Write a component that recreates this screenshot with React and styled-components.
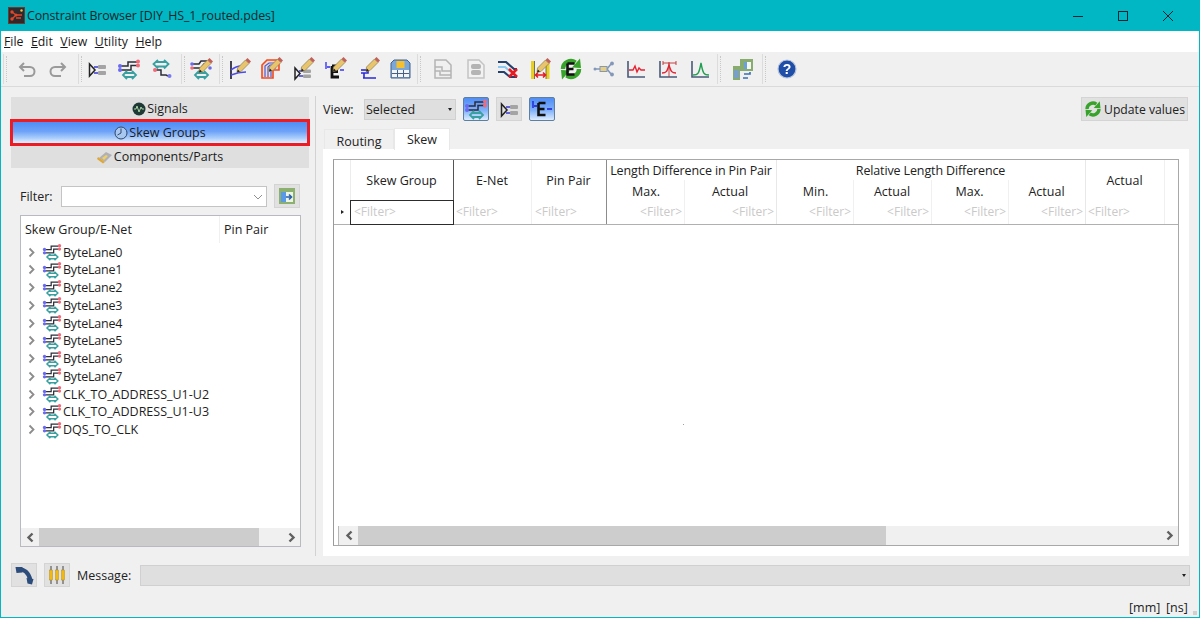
import React from 'react';
import styled, { createGlobalStyle } from 'styled-components';

const GlobalStyle = createGlobalStyle`
  html, body { margin: 0; padding: 0; background: #f0f0f0; }
  body { font-family: "Open Sans", "Noto Sans", "Liberation Sans", sans-serif; font-size: 12.5px; color: #222; overflow: hidden; }
  * { box-sizing: border-box; }
`;

const Window = styled.div`
  position: relative;
  width: 1200px;
  height: 618px;
  background: #f0f0f0;
  overflow: hidden;
  &::after {
    content: '';
    position: absolute;
    inset: 0;
    border: 1px solid #00b7c3;
    pointer-events: none;
  }
`;

const TitleBar = styled.div`
  position: absolute;
  left: 0;
  top: 0;
  width: 1200px;
  height: 31px;
  background: #00b7c3;
  display: flex;
  align-items: center;
  padding-left: 8px;
  color: #10282c;
  font-size: 12.4px;
`;

const TitleText = styled.span`
  margin-left: 2px;
  letter-spacing: -0.1px;
`;

const WinButton = styled.div`
  position: absolute;
  top: 0;
  left: ${(p) => p.$x}px;
  width: 45px;
  height: 31px;
  display: flex;
  align-items: center;
  justify-content: center;
`;

const MenuBar = styled.div`
  position: absolute;
  left: 1px;
  top: 31px;
  width: 1198px;
  height: 21px;
  background: #fff;
  display: flex;
  align-items: center;
  padding-left: 3px;
  gap: 7.5px;
  font-size: 12.3px;
  color: #1a1a1a;
`;

const MenuItem = styled.span`
  &::first-letter { text-decoration: underline; }
`;

const Toolbar = styled.div`
  position: absolute;
  left: 0;
  top: 52px;
  width: 100%;
  height: 35px;
  background: #f0f0f0;
  border-bottom: 1px solid #dadada;
`;

const ToolIcon = styled.div`
  position: absolute;
  top: 5px;
  left: ${(p) => p.$x - 12}px;
  width: 24px;
  height: 24px;
  filter: blur(0.35px);
`;

const ToolSep = styled.div`
  position: absolute;
  top: 2px;
  height: 30px;
  left: ${(p) => p.$x}px;
  width: 5px;
  border-left: 1px solid #dcdcdc;
  &::after {
    content: '';
    position: absolute;
    left: 2px;
    top: 2px;
    bottom: 2px;
    width: 1px;
    border-left: 1px dotted #c8c8c8;
  }
`;

const PanelButton = styled.div`
  position: absolute;
  left: ${(p) => (p.$active ? 10 : 11)}px;
  top: ${(p) => p.$y}px;
  width: ${(p) => (p.$active ? 300 : 298)}px;
  height: ${(p) => p.$h}px;
  display: flex;
  align-items: center;
  justify-content: center;
  gap: 1px;
  font-size: 12.5px;
  color: #1c1c1c;
  background: ${(p) => (p.$active
    ? 'linear-gradient(#4f8df5 0%, #6ea3f8 45%, #a8cbfb 75%, #e4f1fe 100%)'
    : '#dfdfdf')};
  border: ${(p) => (p.$active ? '3px solid #ed1c24' : '0')};
`;

const Label = styled.span`
  position: absolute;
  left: ${(p) => p.$x}px;
  top: ${(p) => p.$y}px;
  line-height: 16px;
  color: #222;
`;

const Combo = styled.div`
  position: absolute;
  left: 61px;
  top: 186px;
  width: 206px;
  height: 21px;
  background: #fff;
  border: 1px solid #c4c4c4;
  display: flex;
  align-items: center;
  justify-content: flex-end;
  padding-right: 3px;
`;

const SquareButton = styled.div`
  position: absolute;
  left: ${(p) => p.$x}px;
  top: ${(p) => p.$y}px;
  width: 26px;
  height: 24px;
  border: 1px solid ${(p) => (p.$on ? '#5f7f9f' : '#d4d4d4')};
  border-radius: ${(p) => (p.$on ? '2px' : '0')};
  background: ${(p) => (p.$on ? 'linear-gradient(#4f8df5 0%, #7fb0fa 55%, #dcecfe 100%)' : '#e1e1e1')};
  display: flex;
  align-items: center;
  justify-content: center;
  svg { filter: blur(0.3px); }
`;

const TreeBox = styled.div`
  position: absolute;
  left: 20px;
  top: 215px;
  width: 281px;
  height: 332px;
  background: #fff;
  border: 1px solid #b9b9c0;
`;

const TreeHead = styled.div`
  height: 27px;
  display: flex;
  align-items: center;
  padding-left: 4px;
  position: relative;
  color: #222;
`;

const TreeHeadCol = styled.span`
  position: absolute;
  left: 198px;
  top: 0;
  height: 27px;
  border-left: 1px solid #f0f0f0;
  padding-left: 4px;
  line-height: 27px;
`;

const TreeRow = styled.div`
  position: absolute;
  left: 0;
  top: ${(p) => p.$y}px;
  height: 18px;
  display: flex;
  align-items: center;
  white-space: nowrap;
  color: #1e1e1e;
`;

const RowArrow = styled.span`
  width: 20px;
  display: flex;
  justify-content: center;
  padding-left: 1px;
  margin-right: 1px;
`;

const RowIcon = styled.span`
  width: 21px;
  height: 18px;
  display: flex;
  align-items: center;
  svg { width: 20px; height: 20px; flex: none; filter: blur(0.35px); }
`;

const ByteText = styled.span`
  letter-spacing: ${(p) => (p.$tight ? '-0.2px' : '0')};
`;

const Scrollbar = styled.div`
  position: absolute;
  left: ${(p) => p.$x}px;
  top: ${(p) => p.$y}px;
  width: ${(p) => p.$w}px;
  height: ${(p) => p.$h}px;
  background: #f0f0f0;
`;

const ScrollThumb = styled.div`
  position: absolute;
  left: ${(p) => p.$x}px;
  top: 0;
  bottom: 0;
  width: ${(p) => p.$w}px;
  background: #cdcdcd;
`;

const ScrollArrow = styled.div`
  position: absolute;
  top: 0;
  bottom: 0;
  ${(p) => (p.$right ? 'right: 0;' : `left: ${p.$x || 0}px;`)}
  width: 18px;
  display: flex;
  align-items: center;
  justify-content: center;
`;

const ScrollStub = styled.div`
  position: absolute;
  left: 0;
  top: 0;
  bottom: 0;
  width: 5px;
  background: #fff;
  border-right: 1px solid #b8b8b8;
`;

const Splitter = styled.div`
  position: absolute;
  left: 315px;
  top: 96px;
  width: 1px;
  height: 460px;
  background: #d2d2d2;
`;

const SelectBox = styled.div`
  position: absolute;
  left: ${(p) => p.$x}px;
  top: ${(p) => p.$y}px;
  width: ${(p) => p.$w}px;
  height: 21px;
  background: #dfdfdf;
  border: 1px solid #d0d0d0;
  display: flex;
  align-items: center;
  padding-left: 1px;
  color: #222;
  &::after {
    content: '';
    position: absolute;
    right: 3px;
    top: 8px;
    border-left: 2px solid transparent;
    border-right: 2px solid transparent;
    border-top: 3px solid #222;
  }
`;

const UpdateButton = styled.div`
  position: absolute;
  left: 1081px;
  top: 97px;
  width: 107px;
  height: 24px;
  background: #e1e1e1;
  border: 1px solid #d4d4d4;
  display: flex;
  align-items: center;
  padding-left: 2px;
  gap: 2px;
  font-size: 12.2px;
  white-space: nowrap;
`;

const Tab = styled.div`
  position: absolute;
  left: ${(p) => p.$x}px;
  top: ${(p) => (p.$active ? 128 : 129)}px;
  width: ${(p) => p.$w}px;
  height: ${(p) => (p.$active ? 22 : 20)}px;
  background: ${(p) => (p.$active ? '#fff' : '#f0f0f0')};
  border: 1px solid #e8e8e8;
  border-bottom: 0;
  text-align: center;
  line-height: ${(p) => (p.$active ? 21 : 23)}px;
  color: #222;
`;

const TabPanel = styled.div`
  position: absolute;
  left: 323px;
  top: 149px;
  width: 866px;
  height: 407px;
  background: #fff;
`;

const Table = styled.div`
  position: absolute;
  left: 333px;
  top: 159px;
  width: 846px;
  height: 387px;
  background: #fff;
  border: 1px solid #a8a8a8;
  border-left-color: #9a9a9a;
`;

const TableRule = styled.div`
  position: absolute;
  left: ${(p) => p.$x}px;
  top: ${(p) => p.$y}px;
  width: ${(p) => p.$w}px;
  height: ${(p) => p.$h}px;
  background: ${(p) => p.$c};
`;

const HeadText = styled.div`
  position: absolute;
  left: ${(p) => p.$x}px;
  top: ${(p) => p.$y}px;
  width: ${(p) => p.$w}px;
  text-align: center;
  line-height: 16px;
  color: #222;
  white-space: nowrap;
  letter-spacing: ${(p) => (p.$tight ? '-0.13px' : '0')};
`;

const FilterText = styled.div`
  position: absolute;
  left: ${(p) => p.$x}px;
  top: 204px;
  width: ${(p) => p.$w}px;
  text-align: ${(p) => (p.$left ? 'left' : 'right')};
  line-height: 16px;
  color: #c9c9c9;
  font-size: 12px;
  white-space: nowrap;
`;

const CurrentCell = styled.div`
  position: absolute;
  left: 350px;
  top: 200px;
  width: 104px;
  height: 25px;
  border: 1px solid #2c2c2c;
  background: #fff;
`;

const RowMark = styled.div`
  position: absolute;
  left: 341px;
  top: 210px;
  border-top: 2px solid transparent;
  border-bottom: 2px solid transparent;
  border-left: 3px solid #222;
`;

const CenterDot = styled.div`
  position: absolute;
  left: 683px;
  top: 424px;
  width: 1px;
  height: 1px;
  background: #a0a0a0;
`;

const StatusText = styled.div`
  position: absolute;
  left: ${(p) => p.$x}px;
  top: 600px;
  line-height: 16px;
  color: #222;
`;

const Grip = styled.div`
  position: absolute;
  right: 3px;
  bottom: 3px;
  width: 4px;
  height: 4px;
  background: #d0d0d0;
`;

// small drawings for the toolbar and tree

const Pencil = ({ x = 0, y = 0 }) => (
  <g transform={`translate(${x} ${y})`}>
    <path d="M10.5 12 L18.5 4 L22 7.5 L14 15.5 L10 16.5 Z" fill="#e8c56c" stroke="#8a7a50" strokeWidth="0.7" />
    <path d="M18.5 4 L20.5 2 L24 5.5 L22 7.5 Z" fill="#c0605a" />
    <path d="M10 16.5 L10.8 13.5 L13 15.5 Z" fill="#222" />
  </g>
);

const NetsIcon = ({ size = 24 }) => (
  <svg width={size} height={size} viewBox="0 0 24 24" fill="none">
    <path d="M4 9 H11 V5 H20" stroke="#2c2c3a" strokeWidth="1.5" />
    <path d="M4 13 H14 V8.5 H20" stroke="#2c2c3a" strokeWidth="1.5" />
    <circle cx="3" cy="9" r="2" fill="#6a6af0" />
    <circle cx="3" cy="13" r="2" fill="#6a6af0" />
    <circle cx="21" cy="4.5" r="2" fill="#f06a78" />
    <circle cx="21" cy="8.5" r="2" fill="#f06a78" />
    <path d="M8 16 H17 M8 20 H17 M10 14 L6 18 L10 22 M15 14 L19 18 L15 22" stroke="#38a0a0" strokeWidth="1.8" />
  </svg>
);

const PairIcon = () => (
  <svg width="24" height="24" viewBox="0 0 24 24" fill="none">
    <path d="M4.5 7 V19 L10 13 Z" stroke="#222" strokeWidth="1.5" />
    <path d="M9 10 H13 M9 16 H13" stroke="#3a3ad0" strokeWidth="1.6" />
    <rect x="13" y="8" width="8" height="4" rx="1" fill="#a4a4a4" />
    <rect x="13" y="14" width="8" height="4" rx="1" fill="#a4a4a4" />
  </svg>
);

const SkewIcon = () => (
  <svg width="24" height="24" viewBox="0 0 24 24" fill="none">
    <path d="M7 5 H17 M7 9.5 H17 M9 3 L4.5 7 L9 11.5 M15 3 L19.5 7 L15 11.5" stroke="#38a0a0" strokeWidth="1.8" />
    <path d="M7 13 H12 V18 H17 L19 19" stroke="#2c2c3a" strokeWidth="1.5" />
    <circle cx="6" cy="13" r="2" fill="#f06a78" />
    <circle cx="20.5" cy="19" r="2" fill="#7a7af0" />
  </svg>
);

const NetsEditIcon = () => (
  <svg width="24" height="24" viewBox="0 0 24 24" fill="none">
    <path d="M4 7 H10 L12 4 H18 M4 11 H12 L15 7 H18" stroke="#2c2c3a" strokeWidth="1.5" />
    <circle cx="3" cy="7" r="1.8" fill="#6a6af0" />
    <circle cx="3" cy="11" r="1.8" fill="#f06a78" />
    <circle cx="21" cy="11" r="1.8" fill="#6a6af0" />
    <path d="M8 16 H17 M8 20 H17 M10 14 L6 18 L10 22 M15 14 L19 18 L15 22" stroke="#38a0a0" strokeWidth="1.8" />
    <Pencil x="0" y="-1" />
  </svg>
);

const GraphEditIcon = () => (
  <svg width="24" height="24" viewBox="0 0 24 24" fill="none">
    <path d="M4 4 V22" stroke="#223" strokeWidth="1.7" />
    <path d="M4 13 C8 10 10 9 14 9 M4 18 C9 16 13 15 19 15" stroke="#4a4af0" strokeWidth="1.5" />
    <Pencil x="0" y="-1" />
  </svg>
);

const TraceEditIcon = () => (
  <svg width="24" height="24" viewBox="0 0 24 24" fill="none">
    <path d="M3 21 V8 L8 3 H20 V13 L14 13 V21 Z" fill="#f8d8c8" stroke="#f04a20" strokeWidth="1.6" />
    <path d="M6 20 V9 L10 6 H17 M9 20 V10 L11 8 H17 M12 20 V11 H17" stroke="#3f60e0" strokeWidth="1.2" />
    <Pencil x="0" y="-2" />
  </svg>
);

const PairEditIcon = () => (
  <svg width="24" height="24" viewBox="0 0 24 24" fill="none">
    <path d="M4 11 V22 L9 16.5 Z" stroke="#222" strokeWidth="1.5" />
    <path d="M8 14 H12 M8 19 H12" stroke="#3a3ad0" strokeWidth="1.5" />
    <rect x="12" y="12.5" width="8" height="3.5" rx="1" fill="#a4a4a4" />
    <rect x="12" y="17.5" width="8" height="3.5" rx="1" fill="#a4a4a4" />
    <Pencil x="0" y="-2" />
  </svg>
);

const ENetEditIcon = () => (
  <svg width="24" height="24" viewBox="0 0 24 24" fill="none">
    <path d="M3 5 V12 M4 10 H7" stroke="#2a2af0" strokeWidth="1.3" />
    <path d="M9 9 H16 M9 9 V20 H16 M9 14.5 H15" stroke="#111" strokeWidth="2.8" />
    <path d="M17 13 H21" stroke="#2a2af0" strokeWidth="1.4" />
    <Pencil x="0" y="-2" />
  </svg>
);

const BranchEditIcon = () => (
  <svg width="24" height="24" viewBox="0 0 24 24" fill="none">
    <path d="M12 10 V16 H5 M12 16 H8 V21 H19 M7 21 H20" stroke="#2a2ad8" strokeWidth="1.6" />
    <path d="M5 13 H12" stroke="#2a2ad8" strokeWidth="1.6" />
    <Pencil x="0" y="-2" />
  </svg>
);

const SaveTableIcon = () => (
  <svg width="24" height="24" viewBox="0 0 24 24" fill="none">
    <path d="M3 6 L6 3 H19 L22 6 V21 H3 Z" fill="#7ba7d8" stroke="#44608a" />
    <rect x="8.5" y="4" width="8" height="7" fill="#f4c030" />
    <rect x="4" y="13" width="17" height="7" fill="#f4f4f4" />
    <path d="M4 16.5 H21 M9.5 13 V20 M15.5 13 V20" stroke="#44608a" />
  </svg>
);

const GhostSchemeIcon = () => (
  <svg width="24" height="24" viewBox="0 0 24 24" fill="none" stroke="#b4b4b4" strokeWidth="1.5">
    <path d="M4 3 H15 L20 8 V21 H4 Z" />
    <path d="M4 10 H11 V14 H20 M4 14 H9 V18 H20" />
  </svg>
);

const GhostPartIcon = () => (
  <svg width="24" height="24" viewBox="0 0 24 24" fill="none">
    <path d="M4 3 H15 L20 8 V21 H4 Z" fill="#f2f2f2" stroke="#c4c4c4" strokeWidth="1.5" />
    <rect x="7" y="7" width="10" height="5" rx="2" fill="#b4b4b4" />
    <rect x="7" y="13" width="10" height="5" rx="2" fill="#b4b4b4" />
  </svg>
);

const LinesCrossIcon = () => (
  <svg width="24" height="24" viewBox="0 0 24 24" fill="none">
    <path d="M2 5 H10 L18 12 H21" stroke="#25406e" strokeWidth="2.2" />
    <path d="M2 10 H9 L15 15" stroke="#8cc8f0" strokeWidth="2.2" />
    <path d="M2 15 H8 L14 20 H21" stroke="#25406e" strokeWidth="2.2" />
    <path d="M13 12 L21 20 M21 12 L13 20" stroke="#e81820" strokeWidth="2.6" />
  </svg>
);

const MeasureEditIcon = () => (
  <svg width="24" height="24" viewBox="0 0 24 24" fill="none">
    <rect x="3" y="4" width="3.5" height="18" fill="#e8d020" />
    <rect x="18" y="6" width="3.5" height="16" fill="#e8d020" />
    <path d="M6.5 4 V22 M18 8 V22" stroke="#554" strokeWidth="0.8" />
    <path d="M8 18 H17 M10 15.5 L7.5 18 L10 20.5 M15 15.5 L17.5 18 L15 20.5" stroke="#e81820" strokeWidth="1.6" />
    <Pencil x="-1" y="-1" />
  </svg>
);

const Recycle = ({ size = 24 }) => (
  <svg width={size} height={size} viewBox="0 0 24 24" fill="none">
    <path d="M4 12 A8 8 0 0 1 16.5 5.5" stroke="#37a32a" strokeWidth="4.5" />
    <path d="M20 12 A8 8 0 0 1 7.5 18.5" stroke="#37a32a" strokeWidth="4.5" />
    <path d="M13 10.5 L22 11 L21 1.5 Z" fill="#37a32a" />
    <path d="M11 13.5 L2 13 L3 22.5 Z" fill="#37a32a" />
  </svg>
);

const RecycleEIcon = () => (
  <svg width="24" height="24" viewBox="0 0 24 24" fill="none">
    <Recycle />
    <path d="M8.5 6.5 H15.5 M8.5 6.5 V17.5 H15.5 M8.5 12 H14.5" stroke="#111" strokeWidth="2.6" />
  </svg>
);

const NodesIcon = () => (
  <svg width="24" height="24" viewBox="0 0 24 24" fill="none">
    <path d="M3 12 H8 M15 12 L19 7 M15 12 L19 17" stroke="#8398b8" strokeWidth="1.6" />
    <rect x="8" y="9.5" width="7" height="5" fill="#e8cf80" stroke="#8398b8" />
    <circle cx="3" cy="12" r="1.5" fill="#8398b8" />
    <circle cx="20" cy="6.5" r="1.9" fill="#8398b8" />
    <circle cx="20" cy="17.5" r="1.9" fill="#8398b8" />
  </svg>
);

const ChartIcon = ({ color, d, extra }) => (
  <svg width="24" height="24" viewBox="0 0 24 24" fill="none">
    <path d="M4 4 V20 H21" stroke="#4a5a78" strokeWidth="1.6" />
    <path d={d} stroke={color} strokeWidth="1.4" />
    {extra}
  </svg>
);

const SwapIcon = () => (
  <svg width="24" height="24" viewBox="0 0 24 24" fill="none">
    <rect x="9" y="2" width="13" height="12" fill="#88ab70" />
    <rect x="13" y="5" width="7" height="7" fill="#f4f8ee" />
    <rect x="13" y="5" width="3" height="7" fill="#6ea0d8" />
    <rect x="2" y="9" width="7" height="14" fill="#88ab70" />
    <rect x="3" y="13" width="5" height="8" fill="#7aa0c8" />
    <path d="M13 17 H19 V15 M17 21 H12" stroke="#3a6fb0" strokeWidth="1.6" />
  </svg>
);

const HelpIcon = () => (
  <svg width="24" height="24" viewBox="0 0 24 24">
    <circle cx="12" cy="12" r="9" fill="#1f4ea8" stroke="#b8c4d8" strokeWidth="1.2" />
    <text x="12" y="17" textAnchor="middle" fontFamily="Liberation Sans, sans-serif" fontWeight="700" fontSize="14" fill="#fff">?</text>
  </svg>
);

const ArrowBack = ({ flip }) => (
  <svg width="24" height="24" viewBox="0 0 24 24" fill="none" stroke="#9a9a9a" strokeWidth="2">
    <g transform={flip ? 'matrix(-1 0 0 1 24 0)' : undefined}>
      <path d="M9 6 L5 10 L9 14" />
      <path d="M5 10 H15 A4.5 4.5 0 0 1 15 19 H9" />
    </g>
  </svg>
);

const Chevron = ({ left, color = '#8c8c8c', w = 1.8 }) => (
  <svg width="9" height="11" viewBox="0 0 9 11" fill="none" stroke={color} strokeWidth={w}>
    <path d={left ? 'M6.5 1.5 L2.5 5.5 L6.5 9.5' : 'M2.5 1.5 L6.5 5.5 L2.5 9.5'} />
  </svg>
);

const ENetIcon = () => (
  <svg width="24" height="24" viewBox="0 0 24 24" fill="none">
    <path d="M3 4 V11 M4 9 H7" stroke="#1a1ad0" strokeWidth="1.3" />
    <path d="M8.5 6 H15.5 M8.5 6 V18 H15.5 M8.5 12 H14.5" stroke="#111" strokeWidth="2.6" />
    <path d="M17 12 H22" stroke="#1a1ad0" strokeWidth="1.5" />
  </svg>
);

const SignalsGlyph = () => (
  <svg width="14" height="14" viewBox="0 0 14 14" fill="none">
    <circle cx="7" cy="7" r="6.5" fill="#1f3a35" />
    <path d="M2 7 H4 L5 4 L7 10 L9 5 L10 7 H12" stroke="#b8e0b0" strokeWidth="0.9" />
  </svg>
);

const ClockGlyph = () => (
  <svg width="14" height="14" viewBox="0 0 14 14" fill="none">
    <circle cx="7" cy="7" r="6" fill="#a8c8f0" stroke="#30486c" strokeWidth="1" />
    <path d="M7 2.5 V7 L3.5 9" stroke="#30486c" strokeWidth="1" />
  </svg>
);

const PartGlyph = () => (
  <svg width="16" height="14" viewBox="0 0 16 14">
    <path d="M2 8 L9 2 L15 5 L8 12 Z" fill="#b0b0b8" />
    <path d="M1 7 L8 12 L6 13.5 L0 9 Z" fill="#e0a830" />
    <path d="M5 8 L9 5 L11 6 L7 10 Z" fill="#f0d060" />
  </svg>
);

const ColumnIcon = () => (
  <svg width="18" height="18" viewBox="0 0 18 18" fill="none">
    <rect x="1" y="1" width="16" height="16" fill="#8cb070" />
    <rect x="3" y="5" width="12" height="10" fill="#eef4e4" />
    <rect x="3" y="5" width="5" height="10" fill="#5a98e8" />
    <path d="M8 10 H13 M11 7.5 L13.5 10 L11 12.5" stroke="#2a5fb0" strokeWidth="1.6" />
  </svg>
);

const PhoneIcon = () => (
  <svg width="22" height="22" viewBox="0 0 22 22" fill="none">
    <path d="M4 5.5 C11 4 16 9 17.5 16.5" stroke="#2c4c7c" strokeWidth="4" />
    <path d="M2.5 3 L9.5 3 L9.5 8.5 L3.5 9 Z M13.5 14 L20.5 15 L19 20.5 L14.5 19.5 Z" fill="#2c4c7c" />
  </svg>
);

const ResistorsIcon = () => (
  <svg width="22" height="22" viewBox="0 0 22 22" fill="none">
    {[5, 11, 17].map((x) => (
      <g key={x}>
        <path d={`M${x} 2 V20`} stroke="#444" strokeWidth="1" />
        <rect x={x - 1.5} y="6" width="3" height="10" fill="#f0b810" stroke="#a88010" strokeWidth="0.4" />
      </g>
    ))}
  </svg>
);

const menus = ['File', 'Edit', 'View', 'Utility', 'Help'];

const tools = [
  [27, <ArrowBack />],
  [58, <ArrowBack flip />],
  [97, <PairIcon />],
  [129, <NetsIcon />],
  [161, <SkewIcon />],
  [201, <NetsEditIcon />],
  [239, <GraphEditIcon />],
  [271, <TraceEditIcon />],
  [303, <PairEditIcon />],
  [335, <ENetEditIcon />],
  [368, <BranchEditIcon />],
  [400, <SaveTableIcon />],
  [443, <GhostSchemeIcon />],
  [476, <GhostPartIcon />],
  [508, <LinesCrossIcon />],
  [540, <MeasureEditIcon />],
  [571, <RecycleEIcon />],
  [604, <NodesIcon />],
  [636, <ChartIcon color="#e82030" d="M5 13 H9 L11 9 L13 15 L15 11 L17 13 H21" />],
  [668, <ChartIcon color="#e82030" d="M6 16 C10 16 11 15 13 8 C15 15 16 16 20 16" extra={<path d="M7 6 H20 M7 4 V8 M20 4 V8 M13 5 V20" stroke="#c03030" strokeWidth="0.9" />} />],
  [700, <ChartIcon color="#20a050" d="M5 18 C10 18 11 17 13 6 C15 17 16 18 21 18" />],
  [743, <SwapIcon />],
  [787, <HelpIcon />],
];

const separators = [3, 78, 181, 219, 417, 717, 762];

const groups = [
  'ByteLane0', 'ByteLane1', 'ByteLane2', 'ByteLane3', 'ByteLane4', 'ByteLane5',
  'ByteLane6', 'ByteLane7', 'CLK_TO_ADDRESS_U1-U2', 'CLK_TO_ADDRESS_U1-U3', 'DQS_TO_CLK',
];

const headers = [
  { x: 350, w: 103, y: 173, t: 'Skew Group' },
  { x: 453, w: 78, y: 173, t: 'E-Net' },
  { x: 531, w: 75, y: 173, t: 'Pin Pair' },
  { x: 606, w: 170, y: 163, t: 'Length Difference in Pin Pair', tight: true },
  { x: 607, w: 78, y: 183.5, t: 'Max.' },
  { x: 684, w: 92, y: 183.5, t: 'Actual' },
  { x: 777, w: 77, y: 183.5, t: 'Min.' },
  { x: 853, w: 78, y: 183.5, t: 'Actual' },
  { x: 931, w: 77, y: 183.5, t: 'Max.' },
  { x: 1008, w: 77, y: 183.5, t: 'Actual' },
  { x: 776, w: 309, y: 163, t: 'Relative Length Difference', tight: true },
  { x: 1085, w: 79, y: 173, t: 'Actual' },
];

const filters = [
  { x: 354, w: 90, left: true },
  { x: 456, w: 70, left: true },
  { x: 535, w: 70, left: true },
  { x: 606, w: 76 },
  { x: 684, w: 90 },
  { x: 776, w: 75 },
  { x: 853, w: 76 },
  { x: 931, w: 75 },
  { x: 1008, w: 75 },
  { x: 1088, w: 70, left: true },
];

const rules = [
  { x: 350, y: 160, w: 1, h: 64, c: '#ececec' },
  { x: 453, y: 160, w: 1, h: 64, c: '#555' },
  { x: 531, y: 160, w: 1, h: 64, c: '#f0f0f0' },
  { x: 606, y: 160, w: 1, h: 64, c: '#8c8c8c' },
  { x: 684, y: 180, w: 1, h: 44, c: '#f0f0f0' },
  { x: 776, y: 160, w: 1, h: 64, c: '#e8e8e8' },
  { x: 853, y: 180, w: 1, h: 44, c: '#f0f0f0' },
  { x: 931, y: 180, w: 1, h: 44, c: '#f0f0f0' },
  { x: 1008, y: 180, w: 1, h: 44, c: '#f0f0f0' },
  { x: 1085, y: 160, w: 1, h: 64, c: '#e8e8e8' },
  { x: 1164, y: 160, w: 1, h: 64, c: '#f0f0f0' },
  { x: 334, y: 224, w: 844, h: 1, c: '#b0b0b0' },
];

const App = () => (
  <Window>
    <GlobalStyle />
    <TitleBar>
      <svg width="17" height="17" viewBox="0 0 17 17" fill="none">
        <rect x="0.5" y="0.5" width="16" height="16" fill="#2c2a2c" stroke="#6a3a30" />
        <path d="M4 5 L8 8 L4 12 M8 8 H14 M8 11 H13" stroke="#e0472a" strokeWidth="1.3" />
        <circle cx="4" cy="5" r="1.7" fill="#e0472a" />
        <circle cx="4" cy="12" r="1.7" fill="#e0472a" />
        <circle cx="8" cy="8" r="1.5" fill="#e0472a" />
        <circle cx="13.5" cy="3.5" r="1.2" fill="#f0c040" />
      </svg>
      <TitleText>Constraint Browser [DIY_HS_1_routed.pdes]</TitleText>
      <WinButton $x={1055}>
        <svg width="10" height="10" viewBox="0 0 10 10"><path d="M0 5.5 H10" stroke="#123" /></svg>
      </WinButton>
      <WinButton $x={1100}>
        <svg width="10" height="10" viewBox="0 0 10 10"><rect x="0.5" y="0.5" width="9" height="9" fill="none" stroke="#123" /></svg>
      </WinButton>
      <WinButton $x={1145}>
        <svg width="10" height="10" viewBox="0 0 10 10"><path d="M0 0 L10 10 M10 0 L0 10" stroke="#123" /></svg>
      </WinButton>
    </TitleBar>

    <MenuBar>
      {menus.map((m) => <MenuItem key={m}>{m}</MenuItem>)}
    </MenuBar>

    <Toolbar>
      {separators.map((x) => <ToolSep key={x} $x={x} />)}
      {tools.map(([x, icon]) => <ToolIcon key={x} $x={x}>{icon}</ToolIcon>)}
    </Toolbar>

    <PanelButton $y={97} $h={23}><SignalsGlyph />Signals</PanelButton>
    <PanelButton $y={145} $h={23}><PartGlyph />Components/Parts</PanelButton>
    <PanelButton $y={119} $h={27} $active><ClockGlyph />Skew Groups</PanelButton>

    <Label $x={20} $y={189}>Filter:</Label>
    <Combo>
      <svg width="10" height="6" viewBox="0 0 10 6" fill="none"><path d="M1 1 L5 5 L9 1" stroke="#909090" /></svg>
    </Combo>
    <SquareButton $x={274} $y={184}><ColumnIcon /></SquareButton>

    <TreeBox>
      <TreeHead>
        Skew Group/E-Net
        <TreeHeadCol>Pin Pair</TreeHeadCol>
      </TreeHead>
      {groups.map((g, i) => (
        <TreeRow key={g} $y={27 + i * 17.75}>
          <RowArrow><Chevron /></RowArrow>
          <RowIcon><NetsIcon /></RowIcon>
          <ByteText $tight={g.startsWith('Byte')}>{g}</ByteText>
        </TreeRow>
      ))}
      <Scrollbar $x={0} $y={312} $w={279} $h={18}>
        <ScrollArrow><Chevron left color="#606060" w={2.4} /></ScrollArrow>
        <ScrollThumb $x={18} $w={220} />
        <ScrollArrow $right><Chevron color="#606060" w={2.4} /></ScrollArrow>
      </Scrollbar>
    </TreeBox>

    <Splitter />

    <Label $x={323} $y={102}>View:</Label>
    <SelectBox $x={364} $y={99} $w={92}>Selected</SelectBox>
    <SquareButton $x={463} $y={97} $on><NetsIcon /></SquareButton>
    <SquareButton $x={496} $y={97}><PairIcon /></SquareButton>
    <SquareButton $x={529} $y={97} $on><ENetIcon /></SquareButton>
    <UpdateButton><Recycle size={18} />Update values</UpdateButton>

    <TabPanel />
    <Tab $x={324} $w={70}>Routing</Tab>
    <Tab $x={394} $w={56} $active>Skew</Tab>

    <Table>
      <Scrollbar $x={0} $y={366} $w={844} $h={19}>
        <ScrollStub />
        <ScrollArrow $x={6}><Chevron left color="#606060" w={2.4} /></ScrollArrow>
        <ScrollThumb $x={24} $w={528} />
        <ScrollArrow $right><Chevron color="#606060" w={2.4} /></ScrollArrow>
      </Scrollbar>
    </Table>
    {rules.map((r) => <TableRule key={`${r.x}-${r.y}`} $x={r.x} $y={r.y} $w={r.w} $h={r.h} $c={r.c} />)}
    <CurrentCell />
    <RowMark />
    {headers.map((h) => <HeadText key={`${h.x}-${h.y}`} $x={h.x} $y={h.y} $w={h.w} $tight={h.tight}>{h.t}</HeadText>)}
    {filters.map((f) => <FilterText key={f.x} $x={f.x} $w={f.w} $left={f.left}>&lt;Filter&gt;</FilterText>)}
    <CenterDot />

    <SquareButton $x={11} $y={563}><PhoneIcon /></SquareButton>
    <SquareButton $x={44} $y={563}><ResistorsIcon /></SquareButton>
    <Label $x={77} $y={568}>Message:</Label>
    <SelectBox $x={140} $y={565} $w={1050} />

    <StatusText $x={1129}>[mm]</StatusText>
    <StatusText $x={1166}>[ns]</StatusText>
    <Grip />
  </Window>
);

export default App;
